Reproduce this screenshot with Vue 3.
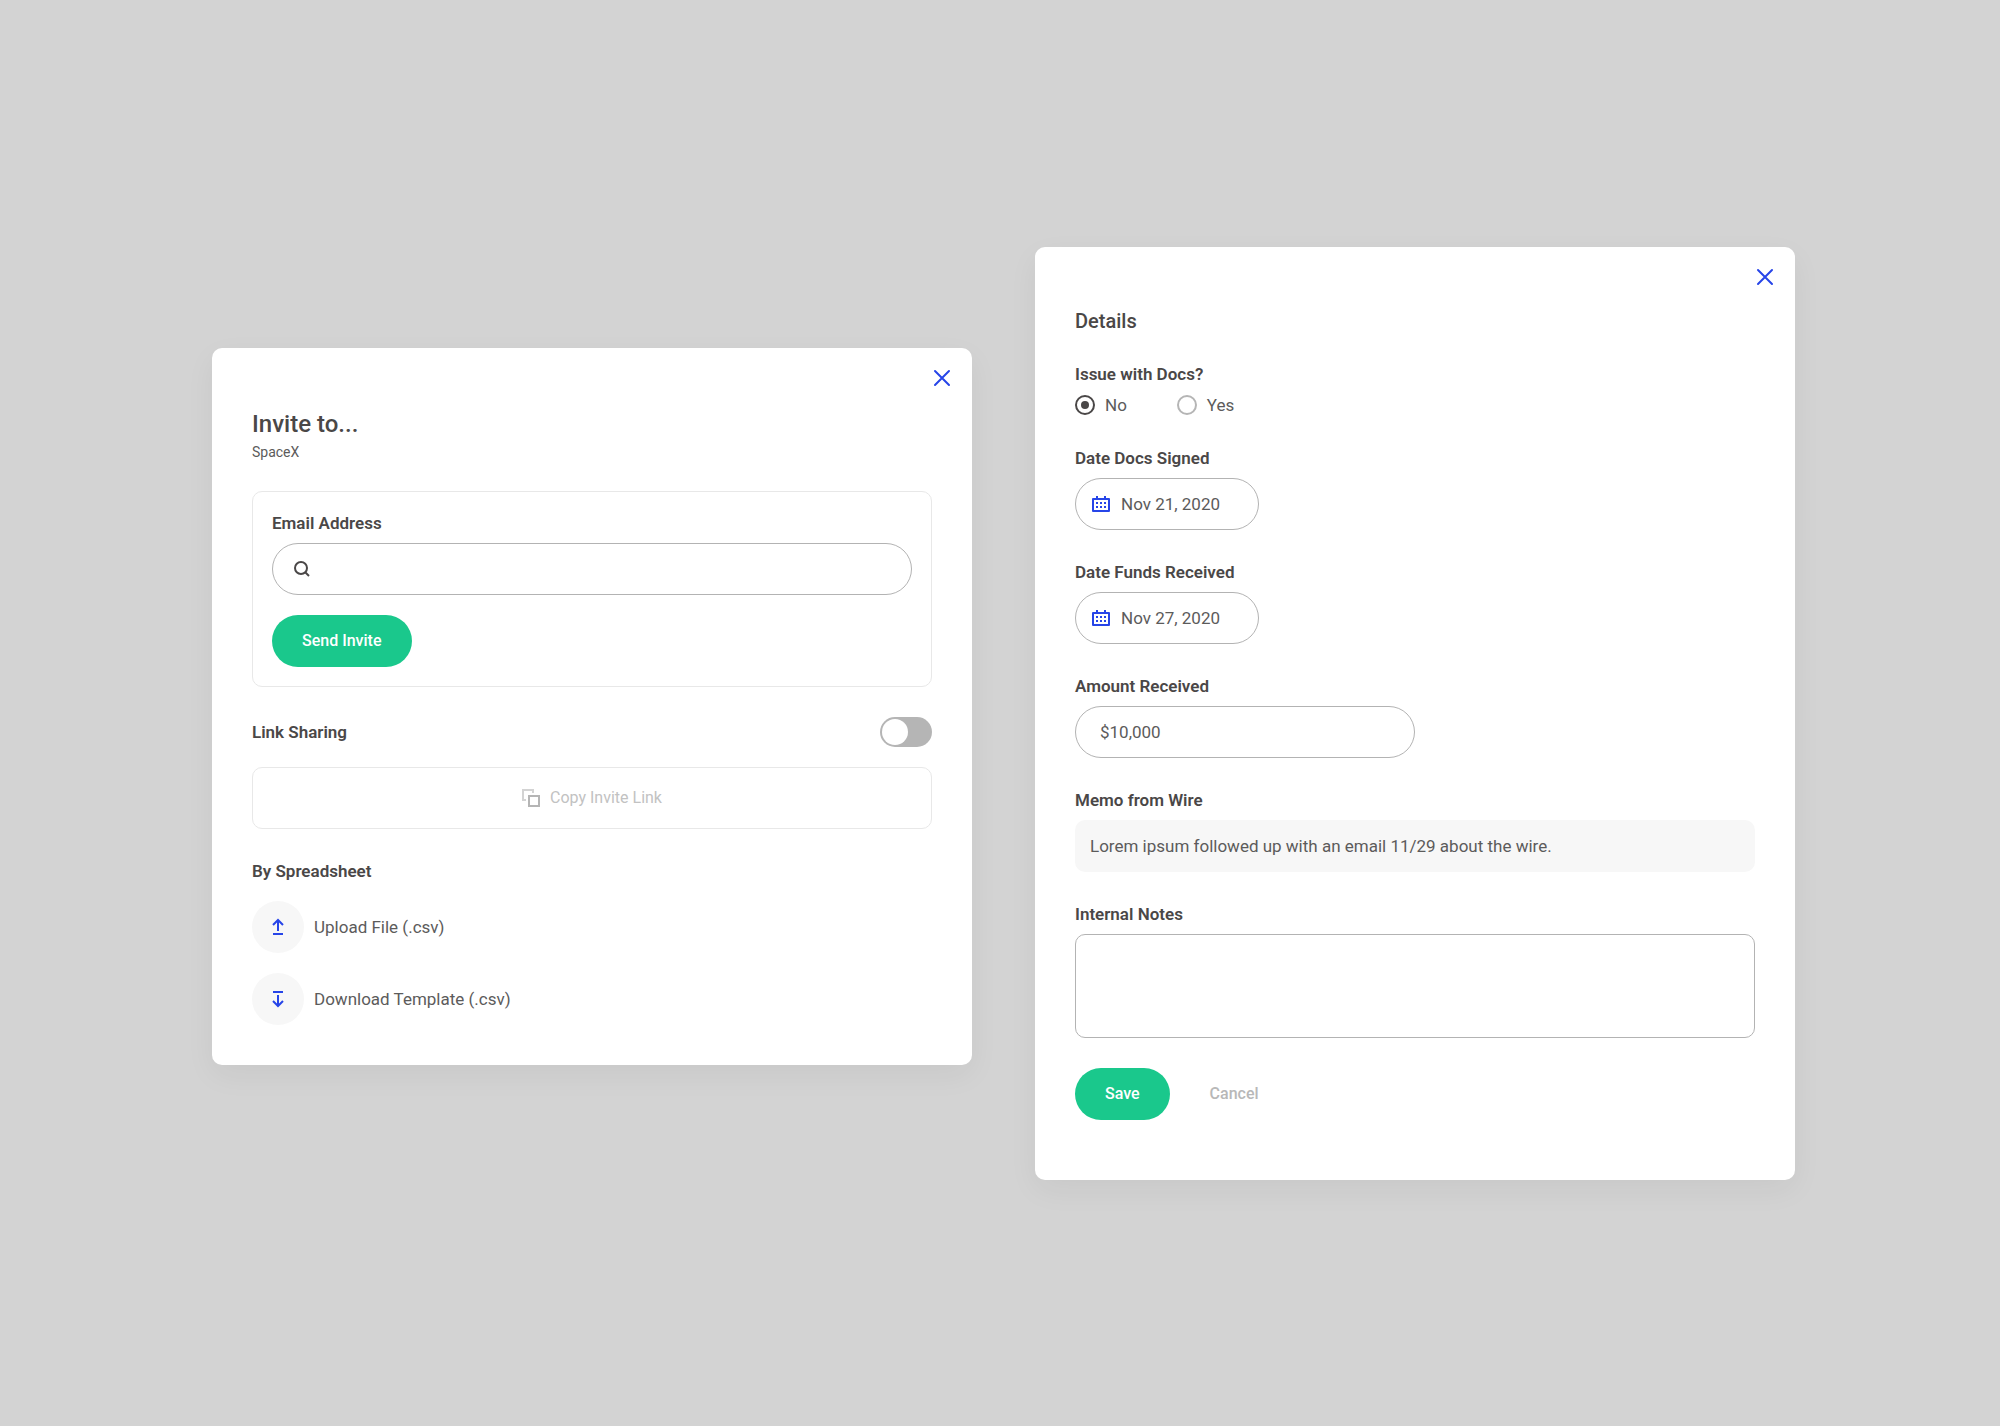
<script setup>
import { ref } from 'vue';

const email = ref('');
const linkSharing = ref(false);

const details = ref({
  issue: 'no',
  docsSigned: 'Nov 21, 2020',
  fundsReceived: 'Nov 27, 2020',
  amount: '$10,000',
  notes: '',
});

const issueOptions = [
  { value: 'no', label: 'No' },
  { value: 'yes', label: 'Yes' },
];

const dateFields = [
  { key: 'docsSigned', label: 'Date Docs Signed' },
  { key: 'fundsReceived', label: 'Date Funds Received' },
];

// 3 x 2 grid of day squares in the calendar icon
const calendarDots = [
  [4, 8], [8, 8], [12, 8],
  [4, 12], [8, 12], [12, 12],
];
</script>

<template>
  <main class="page">
    <section class="card inviteCard">
      <button type="button" class="closeButton" aria-label="Close">
        <svg viewBox="0 0 20 20"><path d="M3 3L17 17M17 3L3 17"/></svg>
      </button>

      <h1>Invite to...</h1>
      <p class="company">SpaceX</p>

      <form class="inviteBox" @submit.prevent>
        <label class="fieldLabel" for="email">Email Address</label>
        <div class="inputBox searchBox">
          <svg class="searchIcon" viewBox="0 0 18 18">
            <circle cx="8" cy="8" r="6"/>
            <path d="M12 12L16 16"/>
          </svg>
          <input id="email" type="text" v-model="email"/>
        </div>
        <button type="submit" class="primaryButton">Send Invite</button>
      </form>

      <div class="sharingRow">
        <label class="fieldLabel" for="sharing">Link Sharing</label>
        <input id="sharing" type="checkbox" class="toggle" v-model="linkSharing"/>
      </div>
      <button type="button" class="copyButton" :disabled="!linkSharing">
        <svg class="copyIcon" viewBox="0 0 18 18">
          <path class="back" d="M4 11H1V1H11V4"/>
          <rect x="7" y="7" width="10" height="10"/>
        </svg>
        Copy Invite Link
      </button>

      <h2 class="fieldLabel">By Spreadsheet</h2>
      <div class="fileLinks">
        <a href="#">
          <span class="iconCircle">
            <svg viewBox="0 0 16 20"><path d="M8 14V3M3 8L8 3L13 8M3 17H13"/></svg>
          </span>
          Upload File (.csv)
        </a>
        <a href="#">
          <span class="iconCircle">
            <svg viewBox="0 0 16 20"><path d="M8 6V17M3 12L8 17L13 12M3 3H13"/></svg>
          </span>
          Download Template (.csv)
        </a>
      </div>
    </section>

    <form class="card detailsCard" @submit.prevent>
      <button type="button" class="closeButton" aria-label="Close">
        <svg viewBox="0 0 20 20"><path d="M3 3L17 17M17 3L3 17"/></svg>
      </button>

      <h1>Details</h1>

      <div class="fields">
        <div class="field" role="radiogroup" aria-labelledby="issueLabel">
          <span id="issueLabel" class="fieldLabel">Issue with Docs?</span>
          <div class="radios">
            <label v-for="option in issueOptions" :key="option.value">
              <input type="radio" name="issue" :value="option.value" v-model="details.issue"/>
              {{ option.label }}
            </label>
          </div>
        </div>

        <div class="field" v-for="field in dateFields" :key="field.key">
          <label class="fieldLabel" :for="field.key">{{ field.label }}</label>
          <div class="inputBox dateBox">
            <svg class="calendarIcon" viewBox="0 0 18 18">
              <rect x="1" y="4" width="16" height="12"/>
              <path d="M5 1V4M13 1V4"/>
              <rect v-for="[x, y] in calendarDots" :key="`${x}-${y}`"
                    class="dot" :x="x" :y="y - 1" width="2" height="2"/>
            </svg>
            <input :id="field.key" type="text" v-model="details[field.key]"/>
          </div>
        </div>

        <div class="field">
          <label class="fieldLabel" for="amount">Amount Received</label>
          <div class="inputBox amountBox">
            <input id="amount" type="text" v-model="details.amount"/>
          </div>
        </div>

        <div class="field">
          <span class="fieldLabel">Memo from Wire</span>
          <p class="memo">Lorem ipsum followed up with an email 11/29 about the wire.</p>
        </div>

        <div class="field">
          <label class="fieldLabel" for="notes">Internal Notes</label>
          <textarea id="notes" v-model="details.notes"></textarea>
        </div>

        <div class="actions">
          <button type="submit" class="primaryButton">Save</button>
          <button type="button" class="cancelButton">Cancel</button>
        </div>
      </div>
    </form>
  </main>
</template>

<style>
body {
  margin: 0;
  background: #d3d3d3;
}
</style>

<style scoped>
* {
  box-sizing: border-box;
}

.page {
  display: grid;
  grid-template-columns: 1fr 1fr;
  align-items: center;
  gap: 63px;
  min-height: 100vh;
  padding: 40px 205px 40px 212px;
  font-family: Roboto, "Liberation Sans", sans-serif;
  font-size: 17px;
  line-height: 24px;
  color: #5c5b5b;
}

.card {
  display: flex;
  flex-direction: column;
  padding: 20px 40px 40px;
  border-radius: 10px;
  background: #fff;
  box-shadow: 0 10px 30px rgba(0, 0, 0, .05);
}

.inviteCard {
  margin-bottom: 14px;
}

.detailsCard {
  padding-bottom: 60px;
}

h1, h2, p {
  margin: 0;
}

button, input, textarea {
  font: inherit;
  color: inherit;
}

button {
  padding: 0;
  border: 0;
  background: none;
  cursor: pointer;
}

svg {
  flex: none;
  fill: none;
  stroke: #2745e8;
  stroke-width: 2;
}

.closeButton {
  align-self: flex-end;
  width: 20px;
  height: 20px;
  margin: 0 -20px 20px 0;
}

.closeButton svg {
  display: block;
  stroke-linecap: round;
}

h1 {
  font-size: 24px;
  font-weight: 500;
  line-height: 32px;
  color: #4a4747;
}

.detailsCard h1 {
  font-size: 20px;
  line-height: 28px;
  margin-bottom: 27px;
}

.company {
  margin: 2px 0 29px;
  font-size: 14px;
  line-height: 20px;
}

.fieldLabel {
  font-size: 17px;
  font-weight: 600;
  color: #4a4747;
}

.inviteBox {
  display: flex;
  flex-direction: column;
  align-items: flex-start;
  gap: 8px;
  padding: 19px;
  border: 1px solid #e8e8e8;
  border-radius: 10px;
}

.inviteBox .primaryButton {
  margin-top: 12px;
}

.inputBox {
  display: flex;
  align-items: center;
  height: 52px;
  border: 1px solid #b3b3b3;
  border-radius: 26px;
}

.inputBox input {
  flex: 1;
  min-width: 0;
  padding: 0;
  border: 0;
  outline: 0;
  background: none;
}

.searchBox {
  align-self: stretch;
  gap: 10px;
  padding: 0 20px;
}

.searchIcon {
  width: 18px;
  height: 18px;
  stroke: #4a4747;
}

.primaryButton {
  height: 52px;
  padding: 0 30px;
  border-radius: 26px;
  background: #1ac88c;
  font-size: 16px;
  font-weight: 500;
  color: #fff;
}

.sharingRow {
  display: flex;
  align-items: center;
  justify-content: space-between;
  margin: 30px 0 20px;
}

.toggle {
  appearance: none;
  width: 52px;
  height: 30px;
  margin: 0;
  padding: 2px;
  border-radius: 15px;
  background: #b5b5b5;
}

.toggle::before {
  content: "";
  display: block;
  width: 26px;
  height: 26px;
  border-radius: 50%;
  background: #fff;
}

.toggle:checked {
  background: #1ac88c;
}

.toggle:checked::before {
  margin-left: auto;
}

.copyButton {
  display: flex;
  align-items: center;
  justify-content: center;
  gap: 10px;
  height: 62px;
  margin-bottom: 30px;
  border: 1px solid #e8e8e8;
  border-radius: 10px;
  font-size: 16px;
}

.copyButton:disabled {
  color: #c2c2c2;
}

.copyIcon {
  width: 18px;
  height: 18px;
  stroke: #b5b5b5;
}

.copyIcon .back {
  stroke: #d3d3d3;
}

.fileLinks {
  display: flex;
  flex-direction: column;
  gap: 20px;
  margin-top: 18px;
}

.fileLinks a {
  display: flex;
  align-items: center;
  align-self: flex-start;
  gap: 10px;
  color: inherit;
  text-decoration: none;
}

.iconCircle {
  display: flex;
  align-items: center;
  justify-content: center;
  width: 52px;
  height: 52px;
  border-radius: 50%;
  background: #f7f7f7;
}

.iconCircle svg {
  width: 16px;
  height: 20px;
}

.fields {
  display: flex;
  flex-direction: column;
  gap: 30px;
}

.field {
  display: flex;
  flex-direction: column;
  gap: 8px;
}

.radios {
  display: flex;
  gap: 50px;
}

.radios label {
  display: flex;
  align-items: center;
  gap: 10px;
  line-height: 22px;
}

.radios input {
  appearance: none;
  display: grid;
  place-items: center;
  width: 20px;
  height: 20px;
  margin: 0;
  border: 2px solid #b5b5b5;
  border-radius: 50%;
}

.radios input:checked {
  border-color: #4a4747;
}

.radios input:checked::before {
  content: "";
  width: 8px;
  height: 8px;
  border-radius: 50%;
  background: #4a4747;
}

.dateBox {
  gap: 11px;
  width: 184px;
  padding: 0 16px;
}

.calendarIcon {
  width: 18px;
  height: 18px;
  stroke-linejoin: round;
}

.calendarIcon .dot {
  fill: #2745e8;
  stroke: none;
}

.amountBox {
  width: 50%;
  padding: 0 24px;
}

.memo {
  padding: 14px 15px;
  border-radius: 10px;
  background: #f7f7f7;
}

textarea {
  display: block;
  height: 104px;
  padding: 14px 15px;
  border: 1px solid #b3b3b3;
  border-radius: 10px;
  outline: 0;
  resize: none;
}

.actions {
  display: flex;
  gap: 40px;
}

.cancelButton {
  font-size: 16px;
  font-weight: 500;
  color: #b8b8b8;
}
</style>
